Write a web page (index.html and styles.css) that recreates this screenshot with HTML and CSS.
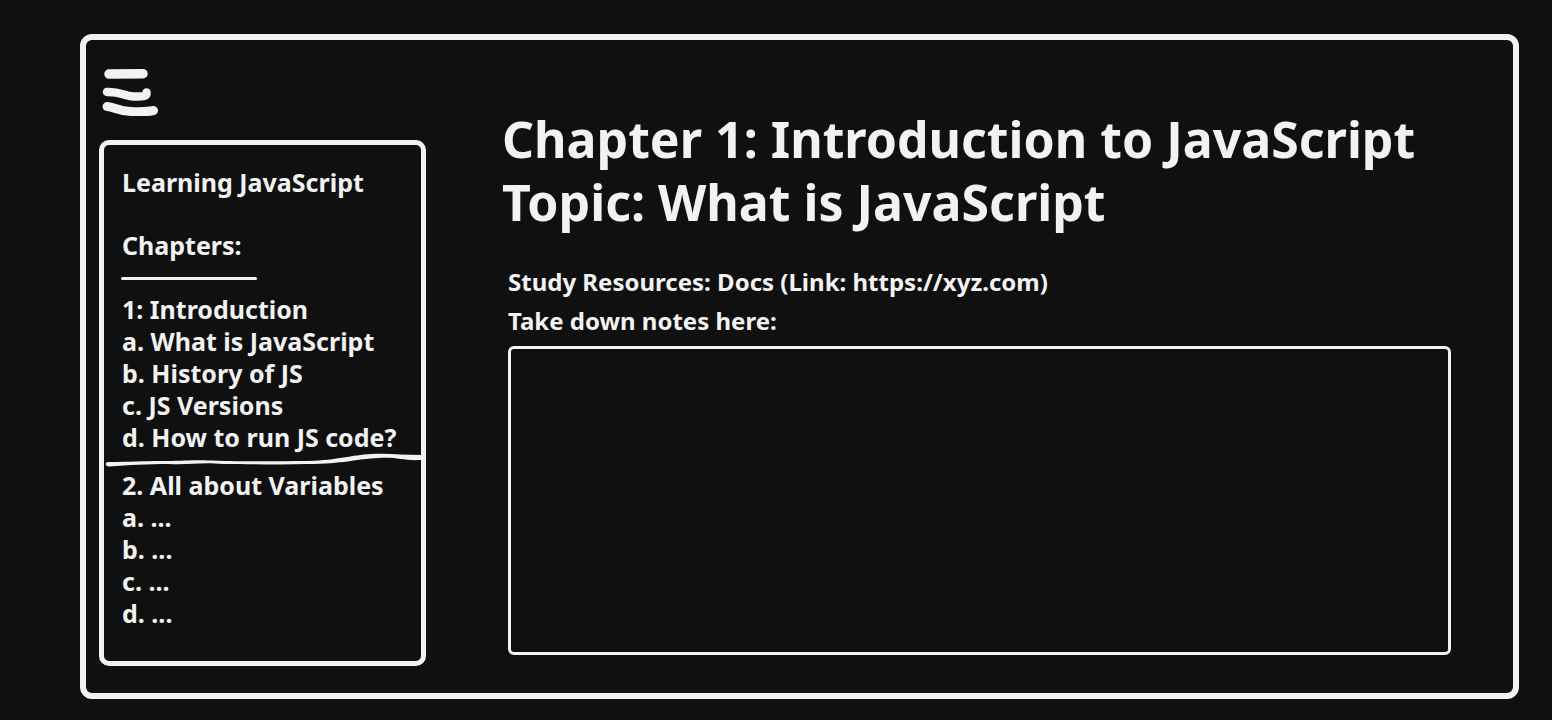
FILE: index.html
```html
<!DOCTYPE html>
<html lang="en">
<head>
<meta charset="utf-8">
<meta name="viewport" content="width=device-width, initial-scale=1">
<title>Learning JavaScript</title>
<link rel="stylesheet" href="styles.css">
</head>
<body>
<div class="frame">
  <div class="side">
    <button class="menu" type="button" aria-label="Menu">
      <svg class="menu-icon" viewBox="0 0 60 52" aria-hidden="true">
        <path d="M10 10 L44 9.700" stroke-width="9.500"/>
        <path d="M8 28 C22 27.500 25 32 34 32.500 C45 33 48 32 47.500 28.500" stroke-width="8.500"/>
        <path d="M8 42.500 C16 43 19 47.500 32 47.500 C42 48 50 47.500 54.500 46.500" stroke-width="9"/>
      </svg>
    </button>
    <nav class="panel" aria-label="Course">
      <h2 class="course">Learning JavaScript</h2>
      <h3 class="chapters">Chapters:</h3>
      <hr class="rule">
      <ul class="list">
        <li>1: Introduction</li>
        <li>a. What is JavaScript</li>
        <li>b. History of JS</li>
        <li>c. JS Versions</li>
        <li>d. How to run JS code?</li>
      </ul>
      <svg class="divider" viewBox="0 0 318 16" preserveAspectRatio="none" aria-hidden="true">
        <path d="M4 9 C28 9 38 8 58 8 C78 8 86 6.500 108 7.500 C150 9 175 8 205 8 C235 7 248 2 268 1 C286 0 300 2 318 2 L318 7 C300 8 295 4 276 5 C252 6 240 11 205 11 C176 12 150 11 120 11 C96 9 86 12 65 11 C43 11 26 12 5 13.500 C1 13.500 1 9 4 9 Z"/>
      </svg>
      <ul class="list">
        <li>2. All about Variables</li>
        <li>a. ...</li>
        <li>b. ...</li>
        <li>c. ...</li>
        <li>d. ...</li>
      </ul>
    </nav>
  </div>
  <main class="main">
    <h1 class="title">Chapter 1: Introduction to JavaScript<br>Topic: What is JavaScript</h1>
    <div class="study">
      <p class="line">Study Resources: Docs (Link: https://xyz.com)</p>
      <label class="line" for="notes">Take down notes here:</label>
      <textarea class="notes" id="notes"></textarea>
    </div>
  </main>
</div>
</body>
</html>
```
FILE: styles.css
```css
* {
  box-sizing: border-box;
}

body {
  margin: 0;
  min-height: 100vh;
  display: flex;
  padding: 34px 33px 21px 80px;
  background: #101010;
  color: #f2f2f2;
  font-family: "Noto Sans", "Open Sans", sans-serif;
  font-size: 24px;
  font-weight: 700;
  line-height: 32px;
}

h1, h2, h3, p, ul {
  margin: 0;
  padding: 0;
  font-size: inherit;
  font-weight: inherit;
}

.frame {
  flex: 1;
  display: flex;
  gap: 76px;
  padding: 24px 62px 27px 13px;
  border: 6px solid #f2f2f2;
  border-radius: 12px;
}

.side {
  flex: 0 0 327px;
  display: flex;
  flex-direction: column;
  align-items: flex-start;
  gap: 24px;
}

.menu {
  padding: 0;
  border: 0;
  background: none;
  cursor: pointer;
}

.menu-icon {
  display: block;
  width: 60px;
  height: 52px;
  fill: none;
  stroke: #f2f2f2;
  stroke-linecap: round;
  stroke-linejoin: round;
}

.panel {
  flex: 1;
  align-self: stretch;
  padding: 21px 0 16px;
  border: 5px solid #f2f2f2;
  border-radius: 10px;
  font-size: 25px;
}

.course,
.chapters,
.list {
  padding: 0 0 0 18px;
  list-style: none;
  white-space: nowrap;
}

.course {
  margin-bottom: 31px;
}

.rule {
  width: 136px;
  height: 3px;
  margin: 16px 0 13px 17px;
  border: 0;
  border-radius: 2px;
  background: #f2f2f2;
}

.divider {
  display: block;
  width: 100%;
  height: 16px;
  fill: #f2f2f2;
}

.main {
  flex: 1;
  min-width: 0;
  display: flex;
  flex-direction: column;
  padding-top: 44px;
}

.title {
  font-size: 50px;
  line-height: 63px;
}

.study {
  flex: 1;
  display: flex;
  flex-direction: column;
  gap: 7px;
  padding: 32px 0 11px 6px;
}

.notes {
  flex: 1;
  width: 100%;
  min-height: 120px;
  margin-top: 2px;
  padding: 12px;
  border: 3px solid #f2f2f2;
  border-radius: 6px;
  background: transparent;
  color: inherit;
  font: inherit;
  resize: none;
}
```
